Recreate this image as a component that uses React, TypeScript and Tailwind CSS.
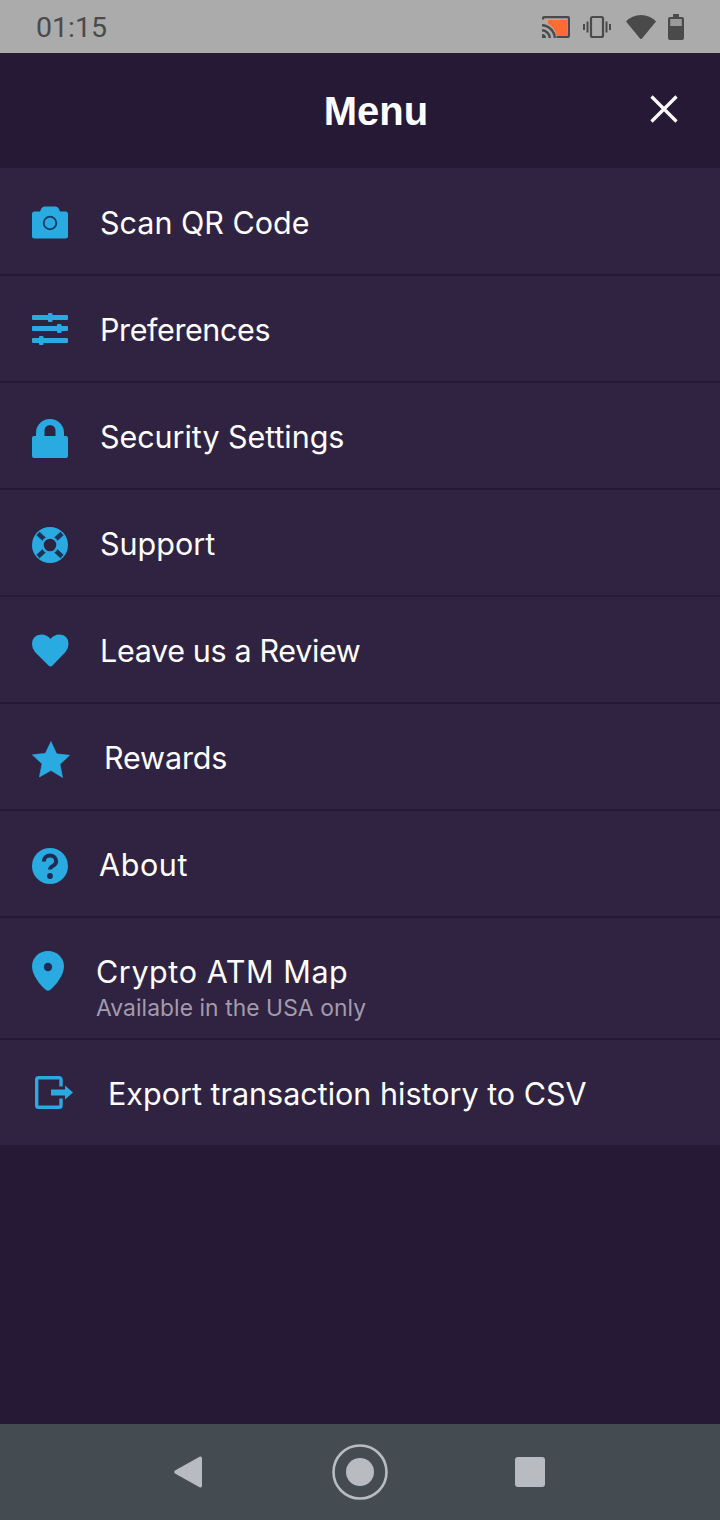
import React from "react";

const B = "#29abe2";
const D = "#302342";

const Svg = ({ w, h, children }: { w: number; h: number; children: React.ReactNode }) => (
  <svg width={w} height={h} viewBox={`0 0 ${w} ${h}`} className="shrink-0 block">{children}</svg>
);

const Camera = () => (
  <Svg w={36} h={33}>
    <path d="M2.5 5.5h5.5l1.5-3.2Q10.5 0.5 12.5 0.5h11q2 0 3 1.8l1.5 3.2h5.5q2.5 0 2.5 2.5v22.5q0 2-2.5 2h-31q-2.5 0-2.5-2V8q0-2.5 2.5-2.5z" fill={B} />
    <circle cx="18" cy="17" r="6.3" fill="none" stroke="#123a66" strokeWidth="1.8" />
  </Svg>
);
const Sliders = () => (
  <Svg w={36} h={32}>
    <rect x="0" y="2" width="36" height="5" rx="1" fill={B} />
    <rect x="0" y="13" width="36" height="5" rx="1" fill={B} />
    <rect x="0" y="25" width="36" height="5" rx="1" fill={B} />
    <rect x="16" y="0" width="4.5" height="9" rx="1" fill={B} />
    <rect x="25" y="11" width="4.5" height="9" rx="1" fill={B} />
    <rect x="7" y="23" width="4.5" height="9" rx="1" fill={B} />
  </Svg>
);
const Lock = () => (
  <Svg w={36} h={39}>
    <path d="M4 17V14a14 14 0 0 1 28 0v3h2q2 0 2 2v18q0 2-2 2H2q-2 0-2-2V19q0-2 2-2zM12.5 17h11v-5.5a5.5 5.5 0 0 0-11 0z" fill={B} fillRule="evenodd" />
  </Svg>
);
const Support = () => (
  <Svg w={36} h={36}>
    <circle cx="18" cy="18" r="18" fill={B} />
    <path d="M6 6.5L12.5 12.5M30 6.5L23.5 12.5M6 29.5L12.5 23.5M30 29.5L23.5 23.5" stroke="#1c3358" strokeWidth="4.5" />
    <circle cx="18" cy="18" r="7.5" fill={D} stroke={B} strokeWidth="2.4" />
  </Svg>
);
const Heart = () => (
  <Svg w={37} h={33}>
    <path d="M18.5 32.5Q17.5 32.5 16.5 31.5L3 18Q0 14.5 0 10Q0 1 9.5 0.5Q15 0.5 18.5 5Q22 0.5 27.5 0.5Q36.5 1 36.5 10Q36.5 14.5 33.5 18L20.5 31.5Q19.5 32.5 18.5 32.5z" fill={B} />
  </Svg>
);
const Star = () => (
  <Svg w={38} h={37}>
    <path d="M19 0.5l5.6 12.3 13 1.5-9.6 9 2.6 13.2L19 29.5 7.4 36l2.6-13.2-9.6-9 13-1.5z" fill={B} strokeLinejoin="round" stroke={B} strokeWidth="0.6" />
  </Svg>
);
const Question = () => (
  <Svg w={36} h={36}>
    <circle cx="18" cy="18" r="18" fill={B} />
    <path d="M11.8 13.5a6.2 6 0 0 1 12.4 0c0 4.4-6.2 4.2-6.2 8" fill="none" stroke="#1f2a55" strokeWidth="4" />
    <circle cx="18" cy="28" r="2.9" fill="#1f2a55" />
  </Svg>
);
const Pin = () => (
  <Svg w={32} h={40}>
    <path d="M16 0C7 0 0 6.5 0 15.5c0 8 8 19 14 23.5q2 1.5 4 0c6-4.5 14-15.5 14-23.5C32 6.5 25 0 16 0z" fill={B} />
    <circle cx="16" cy="16" r="4.2" fill="#1f2a55" />
  </Svg>
);
const Exit = () => (
  <Svg w={38} h={33}>
    <path d="M26 10.5V3.5Q26 1.7 24 1.7H3.5Q1.7 1.7 1.7 3.5V29.5Q1.7 31.3 3.5 31.3H24Q26 31.3 26 29.5V22.5" fill="none" stroke={B} strokeWidth="3.4" />
    <path d="M16 13.5h14V9.5l8 7-8 7v-4H16z" fill={B} />
  </Svg>
);

const rows = [
  { label: "Scan QR Code", Icon: Camera, box: "mt-[1px] mr-[32px]", text: "" },
  { label: "Preferences", Icon: Sliders, box: "mr-[32px]", text: "tracking-[-0.4px]" },
  { label: "Security Settings", Icon: Lock, box: "mt-[5px] mr-[32px]", text: "tracking-[-0.05px]" },
  { label: "Support", Icon: Support, box: "mt-[5px] mr-[32px]", text: "" },
  { label: "Leave us a Review", Icon: Heart, box: "mt-[1px] mr-[31px]", text: "tracking-[-0.35px]" },
  { label: "Rewards", Icon: Star, box: "mt-[5px] mr-[34px]", text: "tracking-[-0.15px]" },
  { label: "About", Icon: Question, box: "mt-[5px] mr-[31px]", text: "tracking-[0.6px]" },
];

const Row = ({ r }: { r: (typeof rows)[number] }) => (
  <div className="h-[107px] flex items-center pl-[32px] border-b-2 border-[#261935]">
    <div className={r.box}><r.Icon /></div>
    <span className={"text-[30.5px] leading-[36px] text-white mt-[2px] " + r.text}>{r.label}</span>
  </div>
);

export default function App() {
  return (
    <div className="w-[720px] h-[1520px] flex flex-col bg-[#261935] font-['Inter','Noto_Sans',sans-serif]">
      <div className="h-[53px] shrink-0 bg-[#ababab] flex items-center pl-[36px] pr-[36px]">
        <span className="flex-1 text-[28.5px] text-[#4a4a4a] font-['Roboto',sans-serif] leading-none mt-[3px]">01:15</span>
        <div className="flex items-center">
          <svg width="28" height="24" viewBox="0 0 28 24" className="block mr-[13px]">
            <path d="M6 5H25V20H14Q13 12 6 9z" fill="#ff6b35" />
            <path d="M0 4.5V3q0-2 2-2h24q2 0 2 2v18q0 2-2 2H14.5v-2.2H25.8V3.2H2.2V4.5z" fill="#4a4a4a" />
            <path d="M0 9a14.5 14.5 0 0 1 14 14h-2.4A12 12 0 0 0 0 11.5zM0 14a9.5 9.5 0 0 1 9 9H6.6A7 7 0 0 0 0 16.5zM0 19a4 4 0 0 1 4 4H0z" fill="#4a4a4a" />
          </svg>
          <svg width="28" height="24" viewBox="0 0 28 24" className="block mr-[15px]">
            <rect x="8" y="2" width="12" height="20" rx="1.5" fill="none" stroke="#4a4a4a" strokeWidth="2.2" />
            <path d="M3.5 6.5h2v11h-2zM22.5 6.5h2v11h-2zM0 9h2v6H0zM26 9h2v6h-2z" fill="#4a4a4a" />
          </svg>
          <svg width="30" height="26" viewBox="0 0 30 26" className="block mr-[12px]">
            <path d="M0 7.5Q6 1 15 1t15 6.5L16 24.5q-1 1.2-2 0z" fill="#4a4a4a" />
          </svg>
          <svg width="16" height="26" viewBox="0 0 16 26" className="block">
            <path d="M5 0h6v3h3q2 0 2 2v19q0 2-2 2H2q-2 0-2-2V5q0-2 2-2h3z" fill="#4a4a4a" />
            <rect x="2.2" y="5" width="11.6" height="7" fill="#9a9a9a" />
          </svg>
        </div>
      </div>

      <div className="h-[115px] shrink-0 flex items-center pl-[102px] pr-[42px]">
        <span className="flex-1 text-center text-white font-bold text-[40px] leading-none mt-[1px] font-['Liberation_Sans',sans-serif]">Menu</span>
        <svg width="28" height="28" viewBox="0 0 28 28" className="block -mt-[3px]">
          <path d="M1.5 1.5l25 25M26.5 1.5l-25 25" stroke="#fff" strokeWidth="3.2" fill="none" />
        </svg>
      </div>

      <div className="flex flex-col bg-[#302342] pt-[1px]">
        {rows.map((r) => <Row key={r.label} r={r} />)}
        <div className="h-[122px] flex items-start pl-[32px] pt-[33px] border-b-2 border-[#261935]">
          <div className="mr-[32px]"><Pin /></div>
          <div className="flex flex-col mt-[3px]">
            <span className="text-[30.5px] leading-[36px] text-white tracking-[0.58px]">Crypto ATM Map</span>
            <span className="text-[22.8px] leading-[26px] text-[#a39bad] mt-[5px] tracking-[0.08px]">Available in the USA only</span>
          </div>
        </div>
        <div className="h-[105px] flex items-center pl-[35px]">
          <div className="mr-[35px]"><Exit /></div>
          <span className="text-[30.5px] leading-[36px] text-white mt-[2px]">Export transaction history to CSV</span>
        </div>
      </div>

      <div className="flex-1" />

      <div className="h-[96px] shrink-0 bg-[#444c52] flex items-center pl-[174px]">
        <svg width="28" height="32" viewBox="0 0 28 32" className="block mr-[130px]">
          <path d="M26 0.5Q28 0 28 2.5V29.5Q28 32 26 31.5L1 17.5Q-0.5 16 1 14.5z" fill="#b8bcc0" />
        </svg>
        <svg width="56" height="56" viewBox="0 0 56 56" className="block mr-[127px]">
          <circle cx="28" cy="28" r="26.5" fill="none" stroke="#b8bcc0" strokeWidth="2.6" />
          <circle cx="28" cy="28" r="14" fill="#b8bcc0" />
        </svg>
        <div className="w-[30px] h-[30px] rounded-[3px] bg-[#b8bcc0]" />
      </div>
    </div>
  );
}
